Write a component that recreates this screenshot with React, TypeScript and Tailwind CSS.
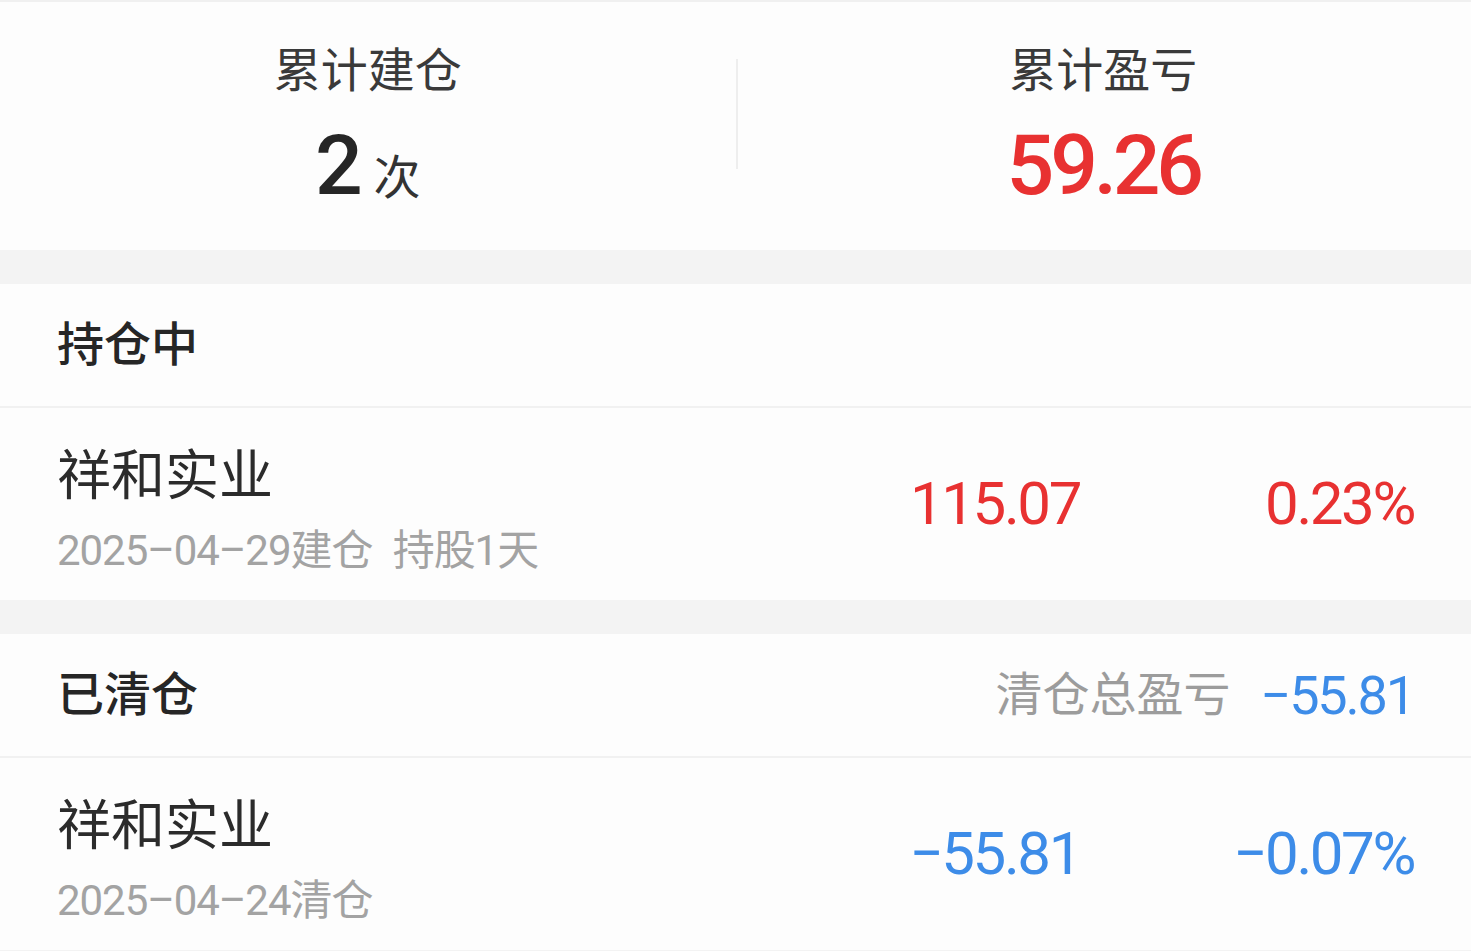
import React from "react";

const font = "font-['Roboto','Noto_Sans_CJK_SC',sans-serif]";

function Header({ title, right }: { title: string; right?: React.ReactNode }) {
  return (
    <div className="flex h-[124px] items-center justify-between border-b-2 border-[#f1f1f1] px-[57px]">
      <span className="text-[47px] font-medium text-[#262626]">{title}</span>
      {right}
    </div>
  );
}

function Row({
  name,
  sub,
  value,
  pct,
  color,
}: {
  name: string;
  sub: string;
  value: string;
  pct: string;
  color: string;
}) {
  return (
    <div className="flex h-[192px] items-center justify-between px-[57px]">
      <div className="flex flex-col pt-[14px]">
        <span className="text-[54px] leading-[60px] text-[#2b2b2b]">{name}</span>
        <span className="mt-[20px] text-[42px] leading-[48px] text-[#a3a3a3] tracking-[-0.025em] whitespace-pre">{sub}</span>
      </div>
      <div className={`flex items-center text-[60px] tracking-[-0.04em] ${color}`}>
        <span className="text-right">{value}</span>
        <span className="w-[334px] text-right">{pct}</span>
      </div>
    </div>
  );
}

export default function App() {
  return (
    <div className={`min-h-screen w-full bg-[#f3f3f3] ${font}`}>
      <section className="grid h-[250px] grid-cols-2 border-t-2 border-[#f0f0f0] bg-[#fdfdfd]">
        <div className="flex flex-col items-center pt-[38px]">
          <span className="text-[47px] leading-[62px] text-[#3a3a3a]">累计建仓</span>
          <div className="mt-[14px] flex items-baseline">
            <span className="text-[84px] leading-[100px] font-medium tracking-[-0.04em] text-[#262626]">2</span>
            <span className="ml-[14px] text-[47px] text-[#333]">次</span>
          </div>
        </div>
        <div className="relative flex flex-col items-center pt-[38px]">
          <div className="absolute left-0 top-[57px] h-[110px] w-[2px] bg-[#eeeeee]" />
          <span className="text-[47px] leading-[62px] text-[#3a3a3a]">累计盈亏</span>
          <span className="mt-[14px] text-[84px] leading-[100px] font-medium tracking-[-0.05em] text-[#e83131]">59.26</span>
        </div>
      </section>

      <section className="mt-[34px] bg-[#fdfdfd]">
        <Header title="持仓中" />
        <Row
          name="祥和实业"
          sub={"2025–04–29建仓\u2002持股1天"}
          value="115.07"
          pct="0.23%"
          color="text-[#e83131]"
        />
      </section>

      <section className="mt-[34px] bg-[#fdfdfd]">
        <Header
          title="已清仓"
          right={
            <div className="flex items-center">
              <span className="text-[47px] text-[#9c9c9c]">清仓总盈亏</span>
              <span className="ml-[30px] text-[54px] tracking-[-0.04em] text-[#3d8ce8]">−55.81</span>
            </div>
          }
        />
        <Row
          name="祥和实业"
          sub="2025–04–24清仓"
          value="−55.81"
          pct="−0.07%"
          color="text-[#3d8ce8]"
        />
      </section>
    </div>
  );
}
